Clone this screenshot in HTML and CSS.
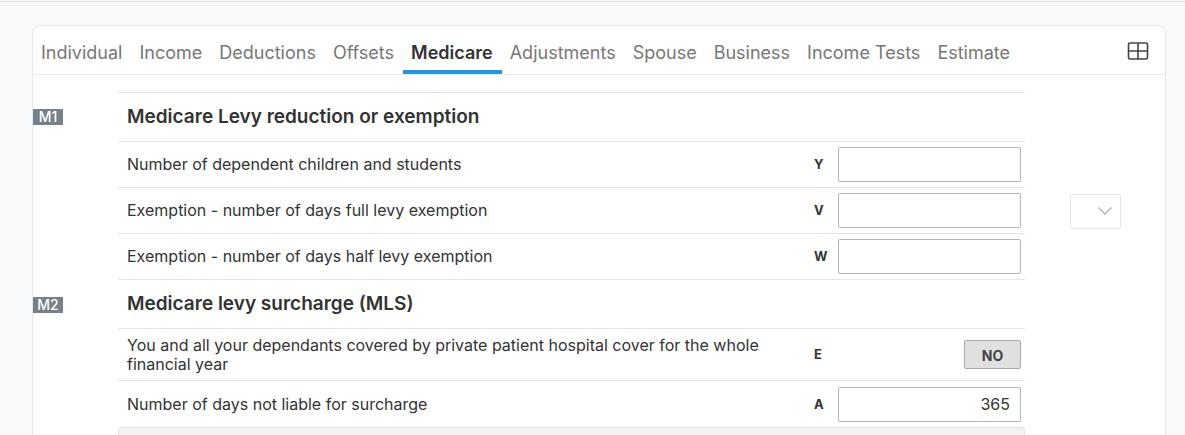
FILE: index.html
```html
<!DOCTYPE html>
<html lang="en">
<head>
    <meta charset="UTF-8">
    <meta name="viewport" content="width=device-width, initial-scale=1.0">
    <title>Medicare</title>
    <link rel="stylesheet" href="styles.css">
</head>
<body>
<header class="topbar"></header>
<main class="card">
    <nav class="tabs">
        <a class="tab" href="#individual">Individual</a>
        <a class="tab" href="#income">Income</a>
        <a class="tab" href="#deductions">Deductions</a>
        <a class="tab" href="#offsets">Offsets</a>
        <a class="tab active" href="#medicare" aria-current="page">Medicare</a>
        <a class="tab" href="#adjustments">Adjustments</a>
        <a class="tab" href="#spouse">Spouse</a>
        <a class="tab" href="#business">Business</a>
        <a class="tab" href="#income-tests">Income Tests</a>
        <a class="tab" href="#estimate">Estimate</a>
        <button class="grid-btn" type="button" aria-label="Worksheets">
            <svg width="22" height="18" viewBox="0 0 22 18" fill="none" stroke="#444" stroke-width="1.6">
                <rect x="1.5" y="1" width="19" height="16" rx="1.5"/>
                <path d="M11 1v16M1.5 9h19"/>
            </svg>
        </button>
    </nav>

    <form class="sheet">
        <div class="row first">
            <span class="item"><span class="badge">M1</span></span>
            <div class="line heading"><h2>Medicare Levy reduction or exemption</h2></div>
        </div>
        <div class="row">
            <div class="line">
                <label for="children">Number of dependent children and students</label>
                <span class="code">Y</span>
                <input type="text" id="children">
            </div>
        </div>
        <div class="row">
            <div class="line">
                <label for="fullDays">Exemption - number of days full levy exemption</label>
                <span class="code">V</span>
                <input type="text" id="fullDays">
            </div>
            <div class="extra">
                <select aria-label="Exemption category" disabled>
                    <option></option>
                </select>
                <svg class="chevron" width="16" height="10" viewBox="0 0 16 10" fill="none" stroke="#bdbdbd" stroke-width="1.6">
                    <path d="M1.5 1.5L8 8l6.5-6.5"/>
                </svg>
            </div>
        </div>
        <div class="row">
            <div class="line">
                <label for="halfDays">Exemption - number of days half levy exemption</label>
                <span class="code">W</span>
                <input type="text" id="halfDays">
            </div>
        </div>
        <div class="row">
            <span class="item"><span class="badge">M2</span></span>
            <div class="line heading"><h2>Medicare levy surcharge (MLS)</h2></div>
        </div>
        <div class="row">
            <div class="line tall">
                <label for="covered">You and all your dependants covered by private patient hospital cover for the whole financial year</label>
                <span class="code">E</span>
                <div class="toggle-cell">
                    <button class="toggle" type="button" id="covered">NO</button>
                </div>
            </div>
        </div>
        <div class="row">
            <div class="line last">
                <label for="notLiable">Number of days not liable for surcharge</label>
                <span class="code">A</span>
                <input type="text" id="notLiable" value="365">
            </div>
        </div>
        <div class="row fill">
            <div class="panel"></div>
        </div>
    </form>
</main>
</body>
</html>
```
FILE: styles.css
```css
* {
    box-sizing: border-box;
}

body {
    margin: 0;
    min-height: 100vh;
    display: flex;
    flex-direction: column;
    background-color: #f9fafc;
    color: #333;
    font-family: Inter, "Liberation Sans", sans-serif;
    font-size: 16px;
    line-height: 19px;
}

.topbar {
    height: 2px;
    border-bottom: 1px solid #dee2e6;
}

.card {
    flex: 1;
    display: flex;
    flex-direction: column;
    margin: 23px 19px 0 32px;
    background-color: #fff;
    border: 1px solid #e6e8ec;
    border-bottom: none;
    border-radius: 8px 8px 0 0;
}

/* Tabs */
.tabs {
    display: flex;
    height: 49px;
    border-bottom: 1px solid #e9ebee;
}

.tab {
    padding: 0 9px 0 8px;
    border-bottom: 4px solid transparent;
    color: #777;
    font-size: 18px;
    line-height: 54px;
    text-decoration: none;
    white-space: nowrap;
}

.tab.active {
    border-bottom-color: #1c97ea;
    color: #333;
    font-weight: 600;
}

.grid-btn {
    display: flex;
    align-items: center;
    margin-left: auto;
    margin-right: 16px;
    padding: 2px 0 0;
    border: none;
    background: none;
    cursor: pointer;
}

/* Form rows: item number, question line, extra control */
.sheet {
    flex: 1;
    display: flex;
    flex-direction: column;
    padding-top: 17px;
}

.row {
    display: grid;
    grid-template-columns: 85px 1fr 140px;
    align-items: center;
}

.line {
    grid-column: 2;
    display: grid;
    grid-template-columns: 1fr 24px 183px;
    align-items: center;
    min-height: 46px;
    padding: 0 4px 0 9px;
    border-bottom: 1px solid #e4e5e7;
}

.line.heading {
    display: block;
    min-height: 49px;
}

.first .line {
    border-top: 1px solid #e4e5e7;
}

.line.tall {
    min-height: 52px;
}

.line.last {
    border-bottom: none;
}

.line label {
    padding-right: 40px;
}

h2 {
    margin: 0;
    font-size: 19px;
    font-weight: 600;
    line-height: 48px;
}

.item {
    display: flex;
}

.badge {
    width: 30px;
    background-color: #77818a;
    color: #fff;
    font-size: 14px;
    font-weight: 500;
    line-height: 16px;
    text-align: center;
}

.code {
    font-size: 13px;
    font-weight: 700;
}

.line input {
    width: 100%;
    height: 35px;
    padding: 0 10px;
    border: 1px solid #b5b5b5;
    border-radius: 2px;
    background-color: #fff;
    color: #333;
    font: inherit;
    text-align: right;
}

.toggle-cell {
    display: flex;
    justify-content: flex-end;
}

.toggle {
    width: 57px;
    height: 29px;
    padding: 2px 0 0;
    border: 1px solid #aaa;
    border-radius: 2px;
    background-color: #e0e0e0;
    color: #444;
    font: inherit;
    font-size: 14px;
    font-weight: 700;
    cursor: pointer;
}

.extra {
    display: grid;
    align-items: center;
    justify-content: end;
    padding-right: 44px;
}

.extra select,
.chevron {
    grid-area: 1 / 1;
}

.extra select {
    width: 51px;
    height: 35px;
    border: 1px solid #e6e6e6;
    border-radius: 2px;
    background-color: #fff;
    appearance: none;
    opacity: 1;
}

.chevron {
    z-index: 1;
    justify-self: end;
    margin-right: 8px;
    pointer-events: none;
}

.row.fill {
    flex: 1;
    align-items: stretch;
}

.panel {
    grid-column: 2;
    min-height: 8px;
    border: 1px solid #e4e5e7;
    border-bottom: none;
    border-radius: 4px 4px 0 0;
    background-color: #f3f3f3;
}
```
